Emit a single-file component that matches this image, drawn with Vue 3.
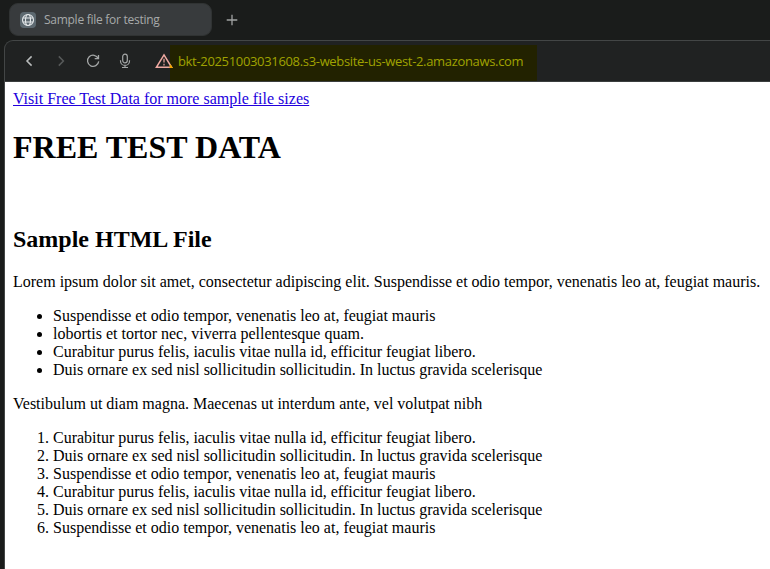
<script setup>
const bullets = [
  'Suspendisse et odio tempor, venenatis leo at, feugiat mauris',
  'lobortis et tortor nec, viverra pellentesque quam.',
  'Curabitur purus felis, iaculis vitae nulla id, efficitur feugiat libero.',
  'Duis ornare ex sed nisl sollicitudin sollicitudin. In luctus gravida scelerisque',
]
const steps = [bullets[2], bullets[3], bullets[0], bullets[2], bullets[3], bullets[0]]
</script>

<template>
  <div class="browser">
    <header class="tabs">
      <div class="tab">
        <span class="favicon">
          <svg width="14" height="14" viewBox="0 0 14 14" fill="none" stroke="#e4e8ea" stroke-width="1.1">
            <circle cx="7" cy="7" r="5.5" />
            <ellipse cx="7" cy="7" rx="2.5" ry="5.5" />
            <path d="M1.8 5h10.4M1.8 9h10.4" />
          </svg>
        </span>
        <span class="tab-title">Sample file for testing</span>
      </div>
      <svg class="plus" width="12" height="12" viewBox="0 0 12 12" stroke="#a0a3a3" stroke-width="1.3">
        <path d="M6 .7v10.6M.7 6h10.6" />
      </svg>
    </header>
    <div class="window">
      <nav class="toolbar">
        <svg class="icon" width="16" height="16" viewBox="0 0 16 16" fill="none" stroke="#b9bcbc" stroke-width="1.5">
          <path d="M10.6 3.4 6 8l4.600 4.600" />
        </svg>
        <svg class="icon" width="16" height="16" viewBox="0 0 16 16" fill="none" stroke="#575a5a" stroke-width="1.5">
          <path d="M5.800 3.400 10.400 8l-4.600 4.600" />
        </svg>
        <svg class="icon" width="16" height="16" viewBox="0 0 16 16" fill="none" stroke="#a4a7a7" stroke-width="1.3">
          <path d="M13.200 5.400A5.600 5.600 0 1 0 13.700 8.400M13.500 1.900v3.700H9.700" />
        </svg>
        <svg class="icon" width="16" height="16" viewBox="0 0 16 16" fill="none" stroke="#a4a7a7" stroke-width="1.2">
          <rect x="5.700" y="1.200" width="4.600" height="8.600" rx="2.300" />
          <path d="M3.500 7.200v.7a4.500 4.500 0 0 0 9 0v-.7M8 12.400v2M5 14.500h6" />
        </svg>
        <div class="address">
          <svg class="warning" width="18" height="16" viewBox="0 0 18 16" fill="none">
            <path d="M9 1.900 16.600 14.300H1.400Z" stroke="#efa9a2" stroke-width="1.500" />
            <path d="M15.100 11.800 16.600 14.300H14.500" stroke="#f2a600" stroke-width="1.500" />
            <path d="M9 5.800v3.800M9 10.700v1.700" stroke="#c8908b" stroke-width="1.500" />
          </svg>
          <span class="url">bkt-20251003031608.s3-website-us-west-2.amazonaws.com</span>
        </div>
      </nav>
      <main class="page">
        <a href="#">Visit Free Test Data for more sample file sizes</a>
        <h1>FREE TEST DATA</h1>
        <br />
        <h2>Sample HTML File</h2>
        <p>Lorem ipsum dolor sit amet, consectetur adipiscing elit. Suspendisse et odio tempor, venenatis leo at, feugiat mauris.</p>
        <ul>
          <li v-for="(item, i) in bullets" :key="i">{{ item }}</li>
        </ul>
        <p>Vestibulum ut diam magna. Maecenas ut interdum ante, vel volutpat nibh</p>
        <ol>
          <li v-for="(item, i) in steps" :key="i">{{ item }}</li>
        </ol>
      </main>
    </div>
  </div>
</template>

<style>
body {
  background: #1a1c1b;
  overflow: hidden;
}
</style>

<style scoped>
.browser {
  display: flex;
  flex-direction: column;
  width: 770px;
  height: 569px;
  overflow: hidden;
  background: #1a1c1b;
}
.tabs {
  display: flex;
  align-items: center;
  flex: none;
  box-sizing: border-box;
  height: 40px;
  padding: 0 0 1px 9px;
}
.tab {
  display: flex;
  align-items: center;
  box-sizing: border-box;
  width: 203px;
  height: 33px;
  padding-left: 10px;
  border: 1px solid #303333;
  border-radius: 9px;
  background: #383b3d;
}
.favicon {
  display: flex;
  align-items: center;
  justify-content: center;
  width: 16px;
  height: 16px;
  border-radius: 4px;
  background: #5d6970;
}
.tab-title {
  margin-left: 8px;
  font: 12px/16px "Open Sans", "Noto Sans", sans-serif;
  letter-spacing: -0.27px;
  color: #a7aaaa;
  white-space: nowrap;
}
.plus {
  margin-left: 14px;
}
.window {
  display: flex;
  flex-direction: column;
  flex: 1;
  min-height: 0;
  margin-left: 4px;
  border-top: 1px solid #434646;
  border-left: 1px solid #434646;
  border-top-left-radius: 9px;
  overflow: hidden;
  background: #202222;
}
.toolbar {
  display: flex;
  align-items: center;
  flex: none;
  height: 40px;
  padding-left: 16px;
  border-bottom: 1px solid #3b3e3e;
}
.icon {
  flex: none;
  margin-right: 16px;
}
.address {
  display: flex;
  align-items: center;
  align-self: flex-end;
  box-sizing: border-box;
  width: 388px;
  height: 36px;
  padding: 0 0 4px 6px;
  background: linear-gradient(#222200, #222200) 21px 0 / 367px 36px no-repeat;
}
.warning {
  flex: none;
}
.url {
  margin-left: 5px;
  font: 13px/18px "Open Sans", "Noto Sans", sans-serif;
  letter-spacing: -0.33px;
  color: #a0a200;
  white-space: nowrap;
}
.page {
  flex: 1;
  padding: 8px;
  background: #fff;
  color: #000;
  font: 16px/18px "Liberation Serif", "Times New Roman", serif;
}
a {
  color: #2200dd;
  text-decoration: underline;
}
h1 {
  margin: 21.44px 0;
  font-size: 32px;
  line-height: 37px;
}
h2 {
  margin: 19.92px 0;
  font-size: 24px;
  line-height: 27px;
}
p,
ul,
ol {
  margin: 16px 0;
}
p {
  white-space: nowrap;
}
ul,
ol {
  padding-left: 40px;
}
</style>
